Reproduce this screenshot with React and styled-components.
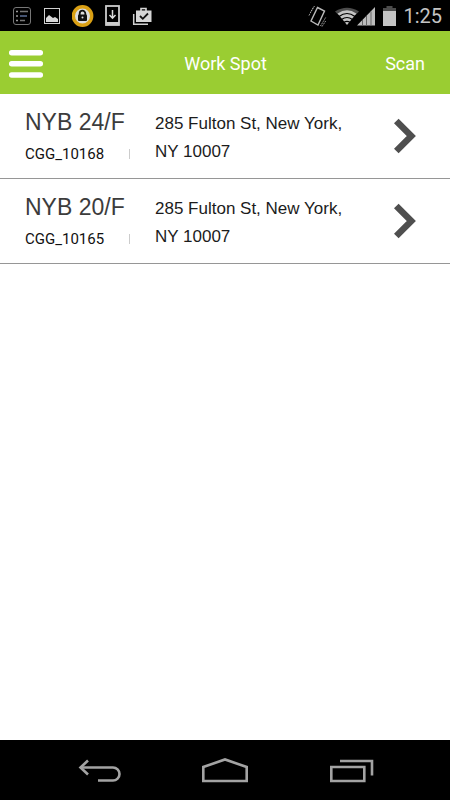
import styled, { createGlobalStyle } from 'styled-components';

const GlobalStyle = createGlobalStyle`
  * {
    box-sizing: border-box;
  }

  body {
    margin: 0;
    background: #fff;
    font-family: Roboto, 'Liberation Sans', sans-serif;
  }

  button {
    padding: 0;
    border: none;
    background: none;
    color: inherit;
    font: inherit;
    cursor: pointer;
  }

  svg {
    display: block;
    flex-shrink: 0;
  }
`;

const Screen = styled.div`
  display: flex;
  flex-direction: column;
  min-height: 100vh;
`;

const StatusBar = styled.div`
  display: flex;
  align-items: center;
  justify-content: space-between;
  height: 31px;
  padding: 0 8px 0 12px;
  background: #000;
`;

const StatusGroup = styled.div`
  display: flex;
  align-items: center;
  gap: ${({ $gap }) => $gap}px;
`;

const Clock = styled.time`
  color: #c4c4c4;
  font-size: 20px;
  line-height: 30px;
`;

const Header = styled.header`
  display: grid;
  grid-template-columns: 1fr auto 1fr;
  align-items: center;
  height: 63px;
  padding: 2px 25px 0 8px;
  background: #9acd32;
  color: #fff;
`;

const MenuButton = styled.button`
  justify-self: start;
`;

const Title = styled.h1`
  margin: 0 0 0 18px;
  font-size: 18px;
  font-weight: 400;
  line-height: 24px;
`;

const ScanButton = styled.button`
  justify-self: end;

  && {
    font-size: 18px;
    line-height: 24px;
  }
`;

const Main = styled.main`
  flex: 1;
`;

const SpotList = styled.ul`
  margin: 0;
  padding: 0;
  list-style: none;
`;

const SpotItem = styled.li`
  border-bottom: 1px solid #969696;
`;

const SpotButton = styled.button`
  display: grid;
  grid-template-columns: 105px 1fr auto;
  align-items: center;
  column-gap: 25px;
  width: 100%;
  min-height: 84px;

  && {
    padding: 0 33px 0 25px;
    text-align: left;
  }
`;

const SpotInfo = styled.span`
  display: flex;
  flex-direction: column;
  gap: 4px;
`;

const SpotName = styled.span`
  color: #3c3c3c;
  font-family: 'Liberation Sans', Arial, sans-serif;
  font-size: 23px;
  line-height: 32px;
  white-space: nowrap;
`;

const SpotCode = styled.span`
  display: flex;
  align-items: center;
  justify-content: space-between;
  color: #111;
  font-size: 15px;
  line-height: 24px;

  &::after {
    content: '';
    width: 1px;
    height: 10px;
    background: #ccc;
  }
`;

const Address = styled.span`
  max-width: 200px;
  padding-top: 4px;
  color: #1c1c1c;
  font-family: 'Liberation Sans', Arial, sans-serif;
  font-size: 17px;
  line-height: 28px;
`;

const NavBar = styled.nav`
  display: flex;
  align-items: center;
  justify-content: space-between;
  height: 60px;
  padding: 0 76px;
  background: #000;
`;

function NotificationIcons() {
  return (
    <StatusGroup $gap={10} aria-hidden="true">
      <svg width="20" height="22" fill="none" stroke="#777">
        <rect x="1.5" y="2.5" width="17" height="17" rx="2.5" />
        <path d="M4 6.5h2M4 11h2M4 15.5h2" stroke="#999" strokeWidth="1.5" />
        <path d="M8 6.5h8M8 15.5h5" stroke="#777" strokeWidth="1.5" />
        <path d="M8 11h7" stroke="#5c6f96" strokeWidth="1.5" />
      </svg>
      <svg width="20" height="22" fill="none">
        <rect x="2.5" y="3.5" width="15" height="15" stroke="#d0d0d0" />
        <path d="M4 17v-4l3-3 4 3 2-1 3 2v3z" fill="#d8d8d8" />
      </svg>
      <svg width="22" height="24" fill="none">
        <circle cx="10.5" cy="12" r="9.2" fill="#ddd" stroke="#daa014" strokeWidth="3.4" />
        <path d="M7.7 11V9.5a2.8 2.8 0 0 1 5.6 0V11" stroke="#111" strokeWidth="1.8" />
        <rect x="6" y="10.5" width="9" height="6.5" rx="1" fill="#111" />
        <circle cx="10.5" cy="13.5" r="1" fill="#ddd" />
      </svg>
      <svg width="18" height="24" fill="none">
        <rect x="2" y="2" width="13" height="19" stroke="#ccc" strokeWidth="1.8" />
        <path d="M2 18h13v3H2z" fill="#ccc" />
        <path d="M8.5 6v8M5.5 11l3 3.2 3-3.2" stroke="#ddd" strokeWidth="1.5" />
      </svg>
      <svg width="21" height="22" fill="none">
        <path d="M1.7 9v10.300H16" stroke="#d0d0d0" strokeWidth="1.5" />
        <path d="M4 5.500h15.500V17H4z" fill="#d6d6d6" />
        <path d="M9 6V3.500h5V6" stroke="#d6d6d6" strokeWidth="1.6" />
        <path d="m8 11 2.800 2.800L16 8.500" stroke="#111" strokeWidth="1.800" />
      </svg>
    </StatusGroup>
  );
}

function SystemIcons() {
  return (
    <StatusGroup $gap={6}>
      <svg width="20" height="24" fill="none" aria-hidden="true">
        <path d="m9.500 3.500 7 3.500-6.500 14-7-4z" stroke="#bbb" strokeWidth="1.4" />
        <path
          d="M1 11.500 5.500 3M3 7.500 6.500 2M12.500 22l5.500-9M14 22.500l4-6"
          stroke="#aaa"
          strokeDasharray="1.500 1"
        />
      </svg>
      <svg width="42" height="24" fill="none" aria-hidden="true">
        <path d="M1 7.500Q13 0 25 7.500L21.500 11Q13 5 4.500 11z" fill="#4c4c4c" />
        <path d="M3.600 9.500Q13 3 22.400 9.500L13 21z" fill="#c4c4c4" />
        <path d="M5 12.500q8-6 16 0M7.500 15.500q5.500-4 11 0M10 18.300q3-2 6 0" stroke="#000" strokeWidth="1.200" />
        <path d="M23 21.500 41 3v18.500z" fill="#bcbcbc" />
        <path d="M28.500 16v5.500M32.500 12v9.500M37 7.500v14" stroke="#666" />
      </svg>
      <svg width="15" height="24" aria-hidden="true">
        <path d="M4.500 2h6v2H14v4H1V4h3.500z" fill="#4c4c4c" />
        <path d="M1 7h13v15H1z" fill="#c4c4c4" />
      </svg>
      <Clock>1:25</Clock>
    </StatusGroup>
  );
}

const spots = [
  { code: 'CGG_10168', name: 'NYB 24/F', address: '285 Fulton St, New York, NY 10007' },
  { code: 'CGG_10165', name: 'NYB 20/F', address: '285 Fulton St, New York, NY 10007' },
];

export default function App() {
  return (
    <Screen>
      <GlobalStyle />
      <StatusBar>
        <NotificationIcons />
        <SystemIcons />
      </StatusBar>
      <Header>
        <MenuButton aria-label="Menu">
          <svg width="36" height="30" stroke="#fff" strokeWidth="5.500" strokeLinecap="round">
            <path d="M3.700 3.700h28.600M3.700 14.800h28.600M3.700 26h28.600" />
          </svg>
        </MenuButton>
        <Title>Work Spot</Title>
        <ScanButton>Scan</ScanButton>
      </Header>
      <Main>
        <SpotList>
          {spots.map((spot) => (
            <SpotItem key={spot.code}>
              <SpotButton>
                <SpotInfo>
                  <SpotName>{spot.name}</SpotName>
                  <SpotCode>{spot.code}</SpotCode>
                </SpotInfo>
                <Address>{spot.address}</Address>
                <svg width="24" height="36" fill="none" stroke="#4f4f4f" strokeWidth="6.500" aria-hidden="true">
                  <path d="M3.300 3 18.300 18l-15 15" />
                </svg>
              </SpotButton>
            </SpotItem>
          ))}
        </SpotList>
      </Main>
      <NavBar>
        <button aria-label="Back">
          <svg width="46" height="30" fill="none" stroke="#a3a3a3" strokeWidth="2.600">
            <path d="M4.500 12.500H37a6 6 0 0 1 0 13H22" />
            <path d="m12 5.500-7.500 7 7.500 7" />
          </svg>
        </button>
        <button aria-label="Home">
          <svg width="48" height="30" fill="none" stroke="#a3a3a3" strokeWidth="2.600">
            <path d="M2.300 26V12L24 4.500 45.700 12v14z" />
          </svg>
        </button>
        <button aria-label="Recent apps">
          <svg width="46" height="30" fill="none" stroke="#a3a3a3" strokeWidth="2.600">
            <path d="M3.300 12h33v14h-33z" />
            <path d="M12 6h32v14.500" />
          </svg>
        </button>
      </NavBar>
    </Screen>
  );
}
